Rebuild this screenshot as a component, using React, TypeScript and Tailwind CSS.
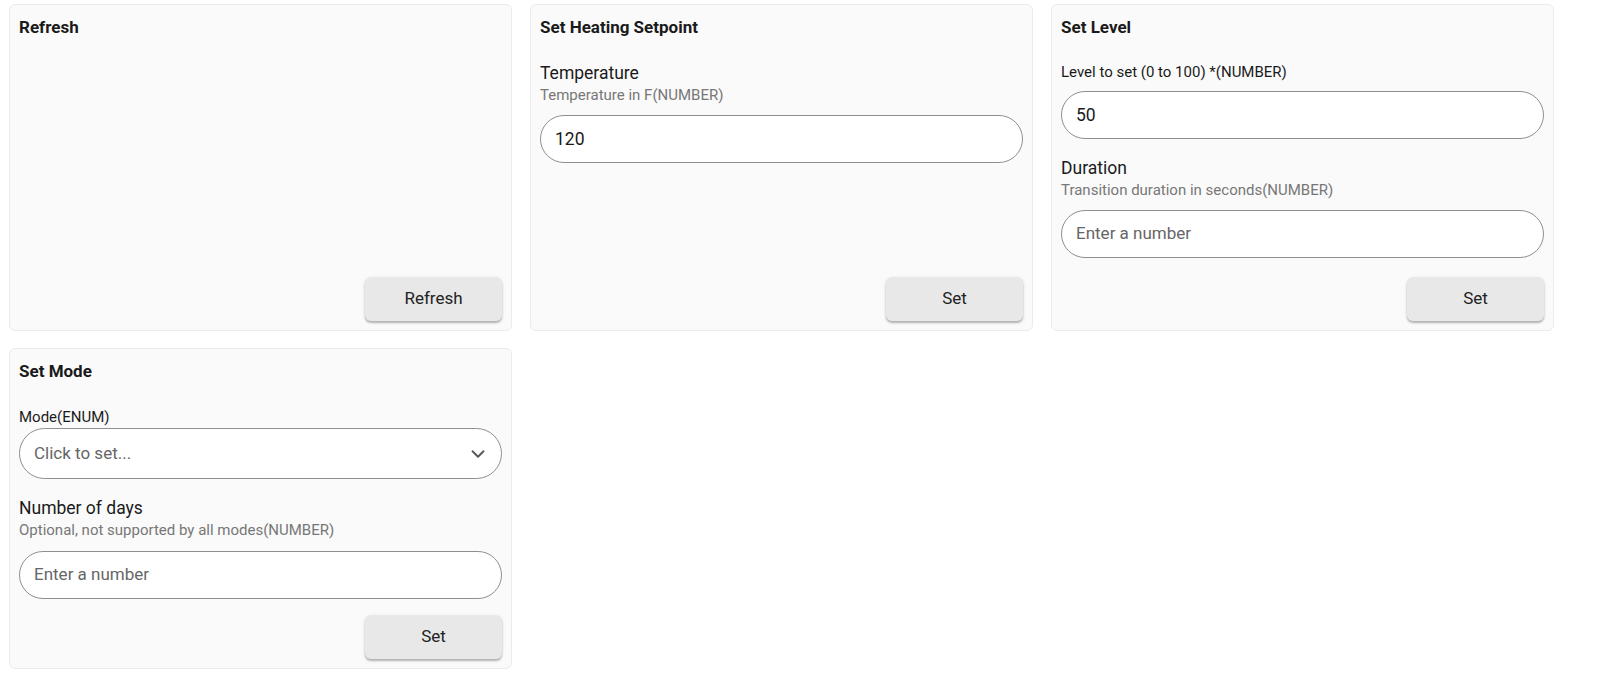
import React from 'react';
import { ChevronDown } from 'lucide-react';

const font = { fontFamily: 'Roboto, "Liberation Sans", sans-serif' };

function Card({ title, children, button }: { title: string; children?: React.ReactNode; button: string }) {
  return (
    <div className="flex flex-1 flex-col rounded-[6px] border border-[#ebebeb] bg-[#fafafa] px-[9px] pt-[10px] pb-[9px]">
      <div className="h-6 text-[17px] font-bold leading-6 text-[#1a1a1a]">{title}</div>
      {children}
      <div className="mt-auto flex justify-end">
        <button className="h-[44px] w-[137px] rounded-[6px] bg-[#e8e8e8] text-[17px] text-[#222] shadow-[0_2px_2px_rgba(0,0,0,0.25),0_1px_4px_rgba(0,0,0,0.08)]">
          {button}
        </button>
      </div>
    </div>
  );
}

function NumberInput({ value, className = '' }: { value?: string; className?: string }) {
  return (
    <div className={`flex h-[48px] items-center rounded-full border border-[#8f8f8f] bg-white px-[14px] text-[17px] ${className}`}>
      {value ? <span className="text-[17.5px] text-[#1a1a1a]">{value}</span> : <span className="text-[#666]">Enter a number</span>}
    </div>
  );
}

function FieldHead({ label, desc, className = '' }: { label: string; desc: string; className?: string }) {
  return (
    <div className={className}>
      <div className="text-[17.5px] leading-6 text-[#1a1a1a]">{label}</div>
      <div className="text-[15px] leading-5 text-[#777]">{desc}</div>
    </div>
  );
}

export default function App() {
  return (
    <div className="min-h-[691px] bg-white" style={font}>
      <div className="ml-[9px] grid w-[1545px] grid-cols-3 gap-x-[18px] gap-y-[17px] pt-[4px]">
        <div className="flex h-[327px] flex-col">
          <Card title="Refresh" button="Refresh" />
        </div>

        <div className="flex h-[327px] flex-col">
          <Card title="Set Heating Setpoint" button="Set">
            <FieldHead className="mt-[22px]" label="Temperature" desc="Temperature in F(NUMBER)" />
            <NumberInput className="mt-[10px]" value="120" />
          </Card>
        </div>

        <div className="flex h-[327px] flex-col">
          <Card title="Set Level" button="Set">
            <div className="mt-[23px] text-[15px] leading-5 text-[#1a1a1a]">Level to set (0 to 100) *(NUMBER)</div>
            <NumberInput className="mt-[9px]" value="50" />
            <FieldHead className="mt-[17px]" label="Duration" desc="Transition duration in seconds(NUMBER)" />
            <NumberInput className="mt-[10px]" />
          </Card>
        </div>

        <div className="flex h-[321px] flex-col">
          <Card title="Set Mode" button="Set">
            <div className="mt-[24px] text-[15px] leading-5 text-[#1a1a1a]">Mode(ENUM)</div>
            <div className="mt-[1px] flex h-[51px] items-center justify-between rounded-full border border-[#8f8f8f] bg-white pl-[14px] pr-[12px] text-[17px] text-[#666]">
              <span>Click to set...</span>
              <ChevronDown className="h-[22px] w-[22px] text-[#555]" strokeWidth={2} />
            </div>
            <FieldHead className="mt-[17px]" label="Number of days" desc="Optional, not supported by all modes(NUMBER)" />
            <NumberInput className="mt-[11px]" />
          </Card>
        </div>
      </div>
    </div>
  );
}
